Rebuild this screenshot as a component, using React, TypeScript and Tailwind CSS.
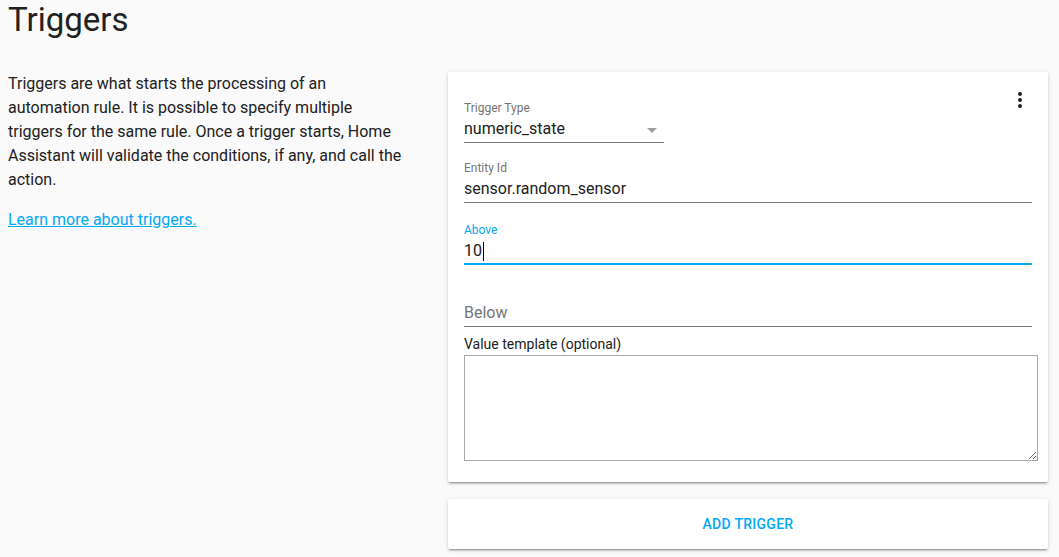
import React from 'react';

const font = { fontFamily: 'Roboto, "Noto Sans", sans-serif' };

const cardShadow =
  'shadow-[0_2px_2px_0_rgba(0,0,0,0.14),0_1px_5px_0_rgba(0,0,0,0.12),0_3px_1px_-2px_rgba(0,0,0,0.2)]';

interface FieldProps {
  label?: string;
  value?: string;
  placeholder?: string;
  focused?: boolean;
  className?: string;
  children?: React.ReactNode;
}

// Поле ввода в стиле paper-input
const Field: React.FC<FieldProps> = ({ label, value, placeholder, focused = false, className = '', children }) => (
  <div className={`pt-[12px] ${className}`}>
    <div
      className={`h-[17px] text-[12px] leading-[16px] ${focused ? 'text-[#03a9f4]' : 'text-[#757575]'}`}
    >
      {label}
    </div>
    <div className="relative flex h-[24px] items-center text-[16px] leading-[24px]">
      {value !== undefined && value !== '' ? (
        <span className="text-[#212121]">{value}</span>
      ) : (
        <span className="text-[#757575]">{placeholder}</span>
      )}
      {focused && <span className="ml-px inline-block h-[19px] w-px bg-black" />}
      {children}
    </div>
    {focused ? (
      <div className="h-[2px] bg-[#03a9f4]" />
    ) : (
      <div className="h-[2px] border-b border-[#757575]" />
    )}
  </div>
);

export default function App() {
  return (
    <div className="min-h-screen bg-[#fafafa] px-2 text-[#212121]" style={font}>
      <h1 className="text-[33px] font-normal leading-[40px]">Triggers</h1>

      <div className="mt-[32px] flex items-start">
        {/* Описание */}
        <div className="mr-[40px] w-[400px] shrink-0">
          <p className="text-[16px] leading-[24px]">
            Triggers are what starts the processing of an automation rule. It is possible to specify
            multiple triggers for the same rule. Once a trigger starts, Home Assistant will validate the
            conditions, if any, and call the action.
          </p>
          <a href="#" className="mt-[16px] block text-[16px] leading-[24px] text-[#03a9f4] underline">
            Learn more about triggers.
          </a>
        </div>

        {/* Карточки */}
        <div className="w-[600px] shrink-0">
          <div className={`relative rounded-[2px] bg-white px-[16px] pb-[21px] pt-[16px] ${cardShadow}`}>
            <button className="absolute right-[16px] top-[16px] h-[24px] w-[24px]">
              <svg viewBox="0 0 24 24" width="24" height="24" fill="#212121">
                <circle cx="12" cy="6" r="2" />
                <circle cx="12" cy="12" r="2" />
                <circle cx="12" cy="18" r="2" />
              </svg>
            </button>

            <Field label="Trigger Type" value="numeric_state" className="w-[200px] pb-[5px]">
              <svg
                viewBox="0 0 24 24"
                width="24"
                height="24"
                fill="#9e9e9e"
                className="absolute right-0 top-[1px]"
              >
                <path d="M7 10l5 5 5-5z" />
              </svg>
            </Field>
            <Field label="Entity Id" value="sensor.random_sensor" className="pb-[7px]" />
            <Field label="Above" value="10" focused className="pb-[7px]" />
            <Field placeholder="Below" className="pb-[7px]" />

            <div className="h-[21px] text-[14px] leading-[21px] text-[#212121]">Value template (optional)</div>
            <textarea
              className="block h-[106px] w-[574px] border border-[#a9a9a9] bg-white"
              defaultValue=""
            />
          </div>

          <div className={`mt-[17px] flex h-[50px] items-center justify-center rounded-[2px] bg-white ${cardShadow}`}>
            <span className="text-[14px] font-medium uppercase tracking-[0.02em] text-[#03a9f4]">Add trigger</span>
          </div>
        </div>
      </div>
    </div>
  );
}
